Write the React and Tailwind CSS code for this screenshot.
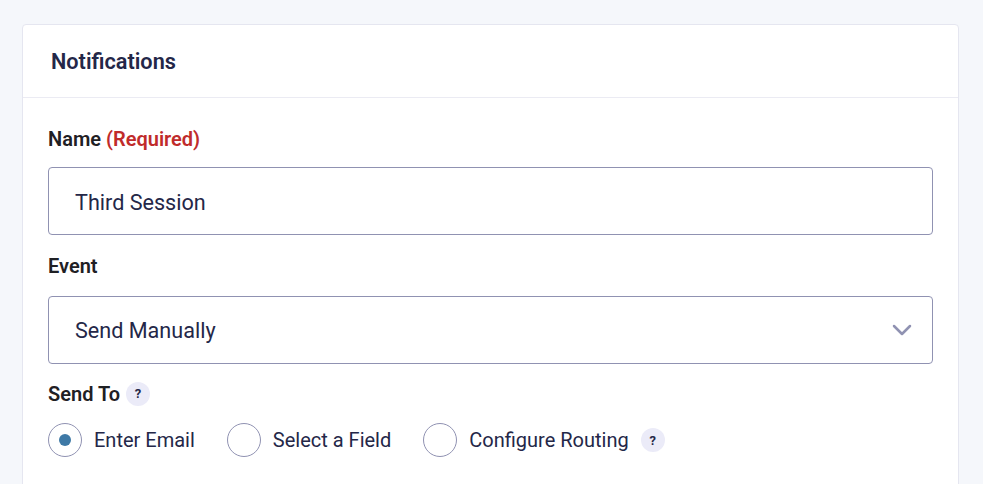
const HelpBadge = () => (
  <span className="inline-flex h-6 w-6 items-center justify-center rounded-full bg-[#ebebf8] text-[13px] font-bold text-[#242748]">
    ?
  </span>
);

const Radio = ({ label, checked, help }) => (
  <label className="flex items-center">
    <span className="flex h-[34px] w-[34px] items-center justify-center rounded-full border border-[#9092b2] bg-white">
      {checked && <span className="h-3 w-3 rounded-full bg-[#3e79a6]" />}
    </span>
    <span className="ml-3 text-xl text-[#242748]">{label}</span>
    {help && (
      <span className="ml-3">
        <HelpBadge />
      </span>
    )}
  </label>
);

export default function App() {
  return (
    <div
      className="min-h-screen overflow-hidden bg-[#f5f7fb] pl-[22px] pr-6 pt-6"
      style={{ fontFamily: "Roboto, 'Liberation Sans', sans-serif" }}
    >
      <div className="h-[480px] rounded border border-[#e5e6f0] bg-white">
        <div className="flex h-[73px] items-center border-b border-[#ebebf3] px-7 pt-[3px]">
          <h2 className="text-[21.7px] font-semibold text-[#242748]">Notifications</h2>
        </div>

        <div className="px-[25px] pt-[29px]">
          <div className="text-xl font-semibold leading-6 text-[#1f2024]">
            Name <span className="text-[#c02b2b]">(Required)</span>
          </div>
          <div className="mt-[16px] flex h-[68px] items-center rounded border border-[#9092b2] px-[26px] pt-[4px] text-[21.6px] text-[#242748]">
            Third Session
          </div>

          <div className="mt-[19px] text-xl font-semibold leading-6 text-[#1f2024]">Event</div>
          <div className="mt-[18px] flex h-[68px] items-center justify-between rounded border border-[#9092b2] pl-[26px] pr-5 text-[21.6px] text-[#242748]">
            <span className="pt-[2px]">Send Manually</span>
            <svg width="20" height="12" viewBox="0 0 20 12" fill="none">
              <path d="M2 2l8 8 8-8" stroke="#9092b2" strokeWidth="2.5" strokeLinecap="round" strokeLinejoin="round" />
            </svg>
          </div>

          <div className="mt-[18px] flex items-center gap-[6px] text-xl font-semibold leading-6 text-[#1f2024]">
            Send To
            <HelpBadge />
          </div>
          <div className="mt-[17px] flex items-center gap-8">
            <Radio label="Enter Email" checked />
            <Radio label="Select a Field" />
            <Radio label="Configure Routing" help />
          </div>
        </div>
      </div>
    </div>
  );
}
